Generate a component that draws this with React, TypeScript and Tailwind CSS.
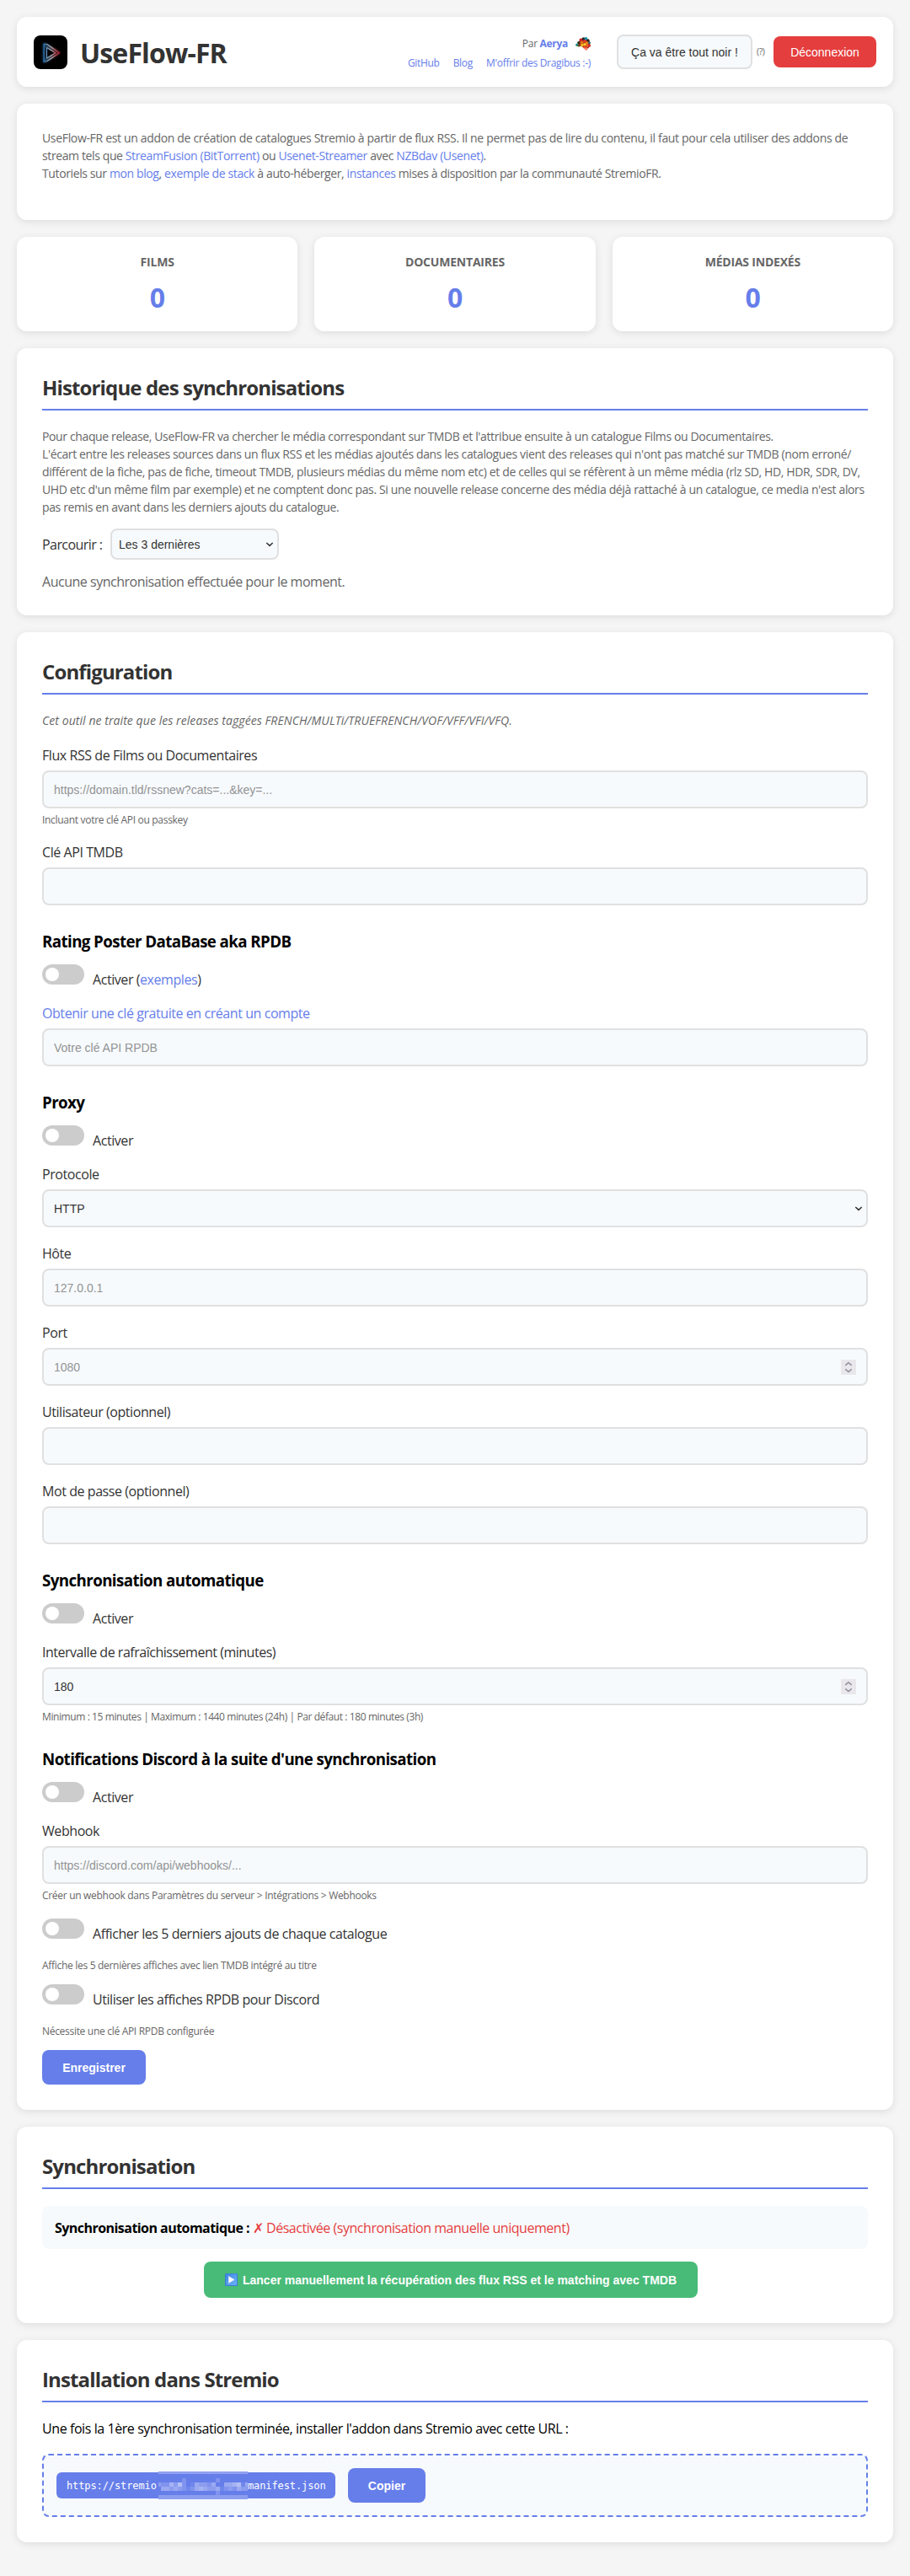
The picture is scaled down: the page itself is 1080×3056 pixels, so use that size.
import type { ReactNode } from "react";
import { clsx } from "clsx";

const STATS = [
  { label: "FILMS", value: 0 },
  { label: "DOCUMENTAIRES", value: 0 },
  { label: "MÉDIAS INDEXÉS", value: 0 },
];

const controlClass =
  "h-[45px] w-full rounded-lg border-2 border-[#e0e0e0] bg-[#f7fafc] px-3 font-['Liberation_Sans',sans-serif] text-sm tracking-normal text-[#333] placeholder:text-[#929395] focus:outline-none";

const buttonClass =
  "rounded-lg bg-[#667eea] font-['Liberation_Sans',sans-serif] text-sm font-bold tracking-normal text-white";

// One string per row of 5px blocks, each letter is a shade of MASK_SHADES
const MASK_ROWS = [
  "......b.......b.......a",
  "cbbecfb.adccbd..ddefadd",
  ".ddcdcbabdedccdabcbdccb",
  "..............b........",
];

const MASK_SHADES: Record<string, string> = {
  a: "#7087eb",
  b: "#8093ee",
  c: "#8c9def",
  d: "#9aa9f1",
  e: "#a6b3f3",
  f: "#b3bff5",
};

function Link({ children }: { children: ReactNode }) {
  return (
    <a href="#" className="text-[#667eea]">
      {children}
    </a>
  );
}

function Card({ title, children }: { title?: string; children: ReactNode }) {
  return (
    <section className="rounded-xl bg-white p-[30px] shadow-[0_2px_10px_rgba(0,0,0,0.1)]">
      {title && (
        <h2 className="mb-5 border-b-2 border-[#667eea] pt-px pb-[9px] text-2xl leading-8 font-bold tracking-[-0.036em] text-[#333]">
          {title}
        </h2>
      )}
      {children}
    </section>
  );
}

function Subtitle({ children }: { children: ReactNode }) {
  return (
    <h3 className="mt-[30px] mb-[15px] text-[18.72px] leading-[25px] font-bold tracking-[-0.031em] text-black">
      {children}
    </h3>
  );
}

function Help({ children }: { children: ReactNode }) {
  return <p className="h-4 pt-px text-xs leading-4 tracking-[-0.025em] text-[#666]">{children}</p>;
}

function Field({
  label,
  help,
  last,
  children,
}: {
  label: ReactNode;
  help?: ReactNode;
  last?: boolean;
  children: ReactNode;
}) {
  return (
    <div className={clsx(!last && "mb-5")}>
      <label className="mb-[7px] block pt-px leading-[21px] text-[#333]">{label}</label>
      {children}
      {help && (
        <div className="mt-[5px]">
          <Help>{help}</Help>
        </div>
      )}
    </div>
  );
}

function TextInput({ placeholder }: { placeholder?: string }) {
  return <input type="text" placeholder={placeholder} className={clsx(controlClass, "block")} />;
}

function NumberInput({ placeholder, value }: { placeholder?: string; value?: string }) {
  return (
    <div className="relative">
      <input
        type="text"
        inputMode="numeric"
        placeholder={placeholder}
        defaultValue={value}
        className={clsx(controlClass, "block")}
      />
      <svg
        className="absolute top-[14px] right-[14px] bg-[#e9e7ec]"
        width="18"
        height="18"
        viewBox="0 0 18 18"
        fill="none"
        stroke="#8f8f9d"
        strokeWidth="1.4"
      >
        <path d="M5.3 6.9 L9 3.7 L12.7 6.9" />
        <path d="M5.3 11.4 L9 14.6 L12.7 11.4" />
      </svg>
    </div>
  );
}

function SelectArrow({ className }: { className: string }) {
  return (
    <svg
      className={clsx("pointer-events-none absolute", className)}
      width="10"
      height="8"
      viewBox="0 0 10 8"
      fill="none"
      stroke="#333"
      strokeWidth="1.5"
    >
      <path d="M1.3 2 L5 5.4 L8.7 2" />
    </svg>
  );
}

function Toggle({ children }: { children: ReactNode }) {
  return (
    <div className="mb-5 flex h-[27px] items-start gap-2.5">
      <button
        type="button"
        role="switch"
        aria-checked="false"
        className="flex h-6 w-[50px] items-center rounded-full bg-[#ccc] px-1"
      >
        <span className="h-4 w-4 rounded-full bg-white" />
      </button>
      <span className="mt-2 leading-[21px] text-[#333]">{children}</span>
    </div>
  );
}

function Logo() {
  return (
    <svg width="40" height="40" viewBox="0 0 40 40" fill="none" strokeLinejoin="round">
      <defs>
        <linearGradient id="neon" gradientUnits="userSpaceOnUse" x1="11" y1="0" x2="31" y2="0">
          <stop offset="0" stopColor="#1f6fb5" />
          <stop offset="0.25" stopColor="#6f9fc8" />
          <stop offset="0.5" stopColor="#b9b4bd" />
          <stop offset="0.75" stopColor="#c2525c" />
          <stop offset="1" stopColor="#a3202c" />
        </linearGradient>
        <filter id="glow" x="-50%" y="-50%" width="200%" height="200%">
          <feGaussianBlur stdDeviation="1.8" />
        </filter>
      </defs>
      <rect width="40" height="40" rx="8" fill="#000" />
      <path d="M12.5 10.5 V31 L30 20.5 Z" stroke="url(#neon)" strokeWidth="3" opacity="0.6" filter="url(#glow)" />
      <path d="M12 10 V31.5 L16 30.5 L30.5 20.7 L16 10.5 Z" stroke="url(#neon)" strokeWidth="1.1" />
      <path d="M15.5 14.5 V27 L26 20.7 Z" stroke="url(#neon)" strokeWidth="1.1" />
    </svg>
  );
}

// Little pile of Dragibus
function Candies() {
  return (
    <svg width="18" height="16" viewBox="0 0 18 16">
      <path d="M2 9 L6 2 L12 0.5 L17 5 L17.5 11 L13 15 L7 11 L3 11 Z" fill="#a8301c" />
      <circle cx="1.8" cy="9.2" r="1.7" fill="#1f8f8a" />
      <circle cx="3.8" cy="6.5" r="1.6" fill="#2b2b1c" />
      <circle cx="4" cy="10" r="1.5" fill="#5d4a1c" />
      <circle cx="6.3" cy="3.4" r="1.8" fill="#c8202a" />
      <circle cx="9.4" cy="2" r="1.7" fill="#262a2e" />
      <circle cx="12.5" cy="1.9" r="1.8" fill="#168fae" />
      <circle cx="15" cy="4" r="1.7" fill="#252525" />
      <circle cx="7.6" cy="6.3" r="1.8" fill="#e8731c" />
      <circle cx="11" cy="5" r="1.7" fill="#e03a1e" />
      <circle cx="13.5" cy="6.8" r="1.6" fill="#f08a1c" />
      <circle cx="16.5" cy="6.8" r="1.4" fill="#1e6f74" />
      <circle cx="7.8" cy="9.6" r="1.8" fill="#f3b81d" />
      <circle cx="11" cy="8.7" r="1.8" fill="#f6cb2a" />
      <circle cx="14" cy="10" r="1.8" fill="#ef6a24" />
      <circle cx="16.5" cy="10" r="1.5" fill="#d9202c" />
      <circle cx="10.6" cy="12" r="1.6" fill="#ef4b2a" />
      <circle cx="12.6" cy="14" r="1.8" fill="#fb8468" />
    </svg>
  );
}

function PlayIcon() {
  return (
    <svg width="15" height="15" viewBox="0 0 15 15">
      <defs>
        <linearGradient id="play" x1="0" y1="0" x2="1" y2="1">
          <stop offset="0" stopColor="#3f86e0" />
          <stop offset="1" stopColor="#6cb2fb" />
        </linearGradient>
      </defs>
      <rect width="15" height="15" rx="1.5" fill="#3c78d2" />
      <rect x="1" y="0.5" width="13" height="13.5" rx="1" fill="url(#play)" />
      <path d="M4.5 3.5 L11 7.5 L4.5 11.5 Z" fill="#fff" stroke="#e8effb" strokeWidth="0.6" strokeLinejoin="round" />
    </svg>
  );
}

// Hides the private host part of the manifest URL
function HostMask() {
  return (
    <svg className="-my-px shrink-0" width="106" height="33" viewBox="0 0 106 33" shapeRendering="crispEdges">
      <rect width="106" height="33" fill="#667eea" />
      <rect width="106" height="3" fill="#91a1ef" />
      <rect y="28" width="106" height="5" fill="#8c9def" />
      {MASK_ROWS.map((row, y) =>
        row
          .split("")
          .map((shade, x) =>
            shade === "." ? null : (
              <rect
                key={`${x}-${y}`}
                x={x === 0 ? 0 : x * 5 - 2}
                y={8 + y * 5}
                width={x === 0 ? 3 : 5}
                height="5"
                fill={MASK_SHADES[shade]}
              />
            ),
          ),
      )}
    </svg>
  );
}

function Header() {
  return (
    <header className="flex h-[83px] items-center justify-between rounded-xl bg-white px-5 shadow-[0_2px_10px_rgba(0,0,0,0.1)]">
      <div className="flex items-center gap-[15px]">
        <Logo />
        <h1 className="pt-0.5 text-[32px] leading-[43px] font-bold tracking-[-0.027em] text-[#333]">UseFlow-FR</h1>
      </div>
      <div className="flex items-center">
        <div className="mr-[31px] flex flex-col items-end gap-[7px] pt-[3px] text-xs leading-4 tracking-[-0.025em] text-[#666]">
          <div className="flex items-center gap-[9px]">
            <span>
              Par{" "}
              <a href="#" className="font-bold text-[#667eea]">
                Aerya
              </a>
            </span>
            <Candies />
          </div>
          <div className="flex gap-4">
            <Link>GitHub</Link>
            <Link>Blog</Link>
            <Link>M'offrir des Dragibus :-)</Link>
          </div>
        </div>
        <button className="h-[41px] w-[161px] rounded-lg border-2 border-[#e0e0e0] bg-[#f7fafc] font-['Liberation_Sans',sans-serif] text-sm tracking-normal text-[#333]">
          Ça va être tout noir !
        </button>
        <span className="w-[25px] pl-[5px] text-[10.4px] tracking-[-0.04em] text-[#666]">(?)</span>
        <button className="h-[37px] w-[122px] rounded-lg bg-[#e53e3e] font-['Liberation_Sans',sans-serif] text-sm tracking-normal text-white">
          Déconnexion
        </button>
      </div>
    </header>
  );
}

export default function App() {
  return (
    <div className="flex min-h-[3056px] flex-col gap-5 bg-[#f5f5f5] p-5 font-['Open_Sans','Noto_Sans',sans-serif] text-base tracking-[-0.027em] text-black">
      <Header />

      <Card>
        <p className="mb-[15px] text-sm leading-[21px] tracking-[-0.0275em] text-[#666]">
          <span className="tracking-[-0.0237em]">
            UseFlow-FR est un addon de création de catalogues Stremio à partir de flux RSS. Il ne permet pas de lire du
            contenu, il faut pour cela utiliser des addons de
          </span>
          <br />
          stream tels que <Link>StreamFusion (BitTorrent)</Link> ou <Link>Usenet-Streamer</Link> avec{" "}
          <Link>NZBdav (Usenet)</Link>.
          <br />
          Tutoriels sur <Link>mon blog</Link>, <Link>exemple de stack</Link> à auto-héberger, <Link>instances</Link>{" "}
          mises à disposition par la communauté StremioFR.
        </p>
      </Card>

      <div className="grid grid-cols-3 gap-5">
        {STATS.map((stat) => (
          <div
            key={stat.label}
            className="rounded-xl bg-white p-5 text-center shadow-[0_2px_10px_rgba(0,0,0,0.1)]"
          >
            <h3 className="mb-2.5 text-sm leading-[19px] font-bold tracking-[-0.015em] text-[#666]">{stat.label}</h3>
            <div className="h-[43px] text-[32px] leading-[45px] font-bold text-[#667eea]">{stat.value}</div>
          </div>
        ))}
      </div>

      <Card title="Historique des synchronisations">
        <p className="mb-[15px] text-sm leading-[21px] tracking-[-0.0265em] whitespace-nowrap text-[#666]">
          Pour chaque release, UseFlow-FR va chercher le média correspondant sur TMDB et l'attribue ensuite à un
          catalogue Films ou Documentaires.
          <br />
          L'écart entre les releases sources dans un flux RSS et les médias ajoutés dans les catalogues vient des
          releases qui n'ont pas matché sur TMDB (nom erroné/
          <br />
          différent de la fiche, pas de fiche, timeout TMDB, plusieurs médias du même nom etc) et de celles qui se
          réfèrent à un même média (rlz SD, HD, HDR, SDR, DV,
          <br />
          UHD etc d'un même film par exemple) et ne comptent donc pas. Si une nouvelle release concerne des média déjà
          rattaché à un catalogue, ce media n'est alors
          <br />
          pas remis en avant dans les derniers ajouts du catalogue.
        </p>
        <div className="mb-[15px] flex items-center text-[#333]">
          <label className="w-[81px] tracking-[-0.035em]">Parcourir :</label>
          <div className="relative">
            <select className="block h-[37px] w-[200px] appearance-none rounded-lg border-2 border-[#e0e0e0] bg-[#f7fafc] px-2 font-['Liberation_Sans',sans-serif] text-sm tracking-normal text-[#333]">
              <option>Les 3 dernières</option>
            </select>
            <SelectArrow className="top-[15px] right-1.5" />
          </div>
        </div>
        <p className="h-[21px] pt-px leading-[21px] tracking-[-0.03em] text-[#666]">
          Aucune synchronisation effectuée pour le moment.
        </p>
      </Card>

      <Card title="Configuration">
        <p className="mb-5 text-sm leading-[21px] tracking-[0.005em] text-[#666] italic">
          Cet outil ne traite que les releases taggées FRENCH/MULTi/TRUEFRENCH/VOF/VFF/VFI/VFQ.
        </p>
        <Field label="Flux RSS de Films ou Documentaires" help="Incluant votre clé API ou passkey">
          <TextInput placeholder="https://domain.tld/rssnew?cats=...&key=..." />
        </Field>
        <Field label="Clé API TMDB" last>
          <TextInput />
        </Field>

        <Subtitle>Rating Poster DataBase aka RPDB</Subtitle>
        <Toggle>
          Activer (<Link>exemples</Link>)
        </Toggle>
        <Field label={<Link>Obtenir une clé gratuite en créant un compte</Link>} last>
          <TextInput placeholder="Votre clé API RPDB" />
        </Field>

        <Subtitle>Proxy</Subtitle>
        <Toggle>Activer</Toggle>
        <Field label="Protocole">
          <div className="relative">
            <select className={clsx(controlClass, "block appearance-none")}>
              <option>HTTP</option>
            </select>
            <SelectArrow className="top-[19px] right-1.5" />
          </div>
        </Field>
        <Field label="Hôte">
          <TextInput placeholder="127.0.0.1" />
        </Field>
        <Field label="Port">
          <NumberInput placeholder="1080" />
        </Field>
        <Field label="Utilisateur (optionnel)">
          <TextInput />
        </Field>
        <Field label="Mot de passe (optionnel)" last>
          <TextInput />
        </Field>

        <Subtitle>Synchronisation automatique</Subtitle>
        <Toggle>Activer</Toggle>
        <Field
          label={<span className="tracking-[-0.03em]">Intervalle de rafraîchissement (minutes)</span>}
          help={
            <span className="tracking-[-0.034em]">
              Minimum : 15 minutes | Maximum : 1440 minutes (24h) | Par défaut : 180 minutes (3h)
            </span>
          }
          last
        >
          <NumberInput value="180" />
        </Field>

        <Subtitle>Notifications Discord à la suite d'une synchronisation</Subtitle>
        <Toggle>Activer</Toggle>
        <Field label="Webhook" help="Créer un webhook dans Paramètres du serveur > Intégrations > Webhooks">
          <TextInput placeholder="https://discord.com/api/webhooks/..." />
        </Field>
        <Toggle>Afficher les 5 derniers ajouts de chaque catalogue</Toggle>
        <div className="mb-[15px]">
          <Help>Affiche les 5 dernières affiches avec lien TMDB intégré au titre</Help>
        </div>
        <Toggle>Utiliser les affiches RPDB pour Discord</Toggle>
        <div className="mb-[15px]">
          <Help>Nécessite une clé API RPDB configurée</Help>
        </div>
        <button className={clsx(buttonClass, "block h-[41px] w-[123px]")}>Enregistrer</button>
      </Card>

      <Card title="Synchronisation">
        <div className="mb-[15px] rounded-lg bg-[#f7fafc] px-[15px] pt-4 pb-3.5 leading-[21px]">
          <strong className="tracking-[-0.034em]">Synchronisation automatique :</strong>{" "}
          <span className="tracking-[-0.029em] text-[#e53e3e]">
            ✗ Désactivée (synchronisation manuelle uniquement)
          </span>
        </div>
        <div className="flex justify-center pr-2.5">
          <button className="flex h-[43px] w-[586px] items-center justify-center gap-1.5 rounded-lg bg-[#48bb78] font-['Liberation_Sans',sans-serif] text-sm font-bold tracking-normal whitespace-nowrap text-white">
            <PlayIcon />
            Lancer manuellement la récupération des flux RSS et le matching avec TMDB
          </button>
        </div>
      </Card>

      <Card title="Installation dans Stremio">
        <p className="mb-[19px] pt-px leading-[21px] tracking-[-0.0265em]">
          Une fois la 1ère synchronisation terminée, installer l'addon dans Stremio avec cette URL :
        </p>
        <div className="flex items-center gap-[15px] rounded-lg border-2 border-dashed border-[#667eea] bg-[#f7fafc] p-[15px]">
          <code className="flex h-[31px] w-[331px] items-center rounded-md bg-[#667eea] pl-3 font-['DejaVu_Sans_Mono',monospace] text-xs tracking-[-0.1px] text-white">
            <span className="w-[109px]">https://stremio</span>
            <HostMask />
            <span>manifest.json</span>
          </code>
          <button className={clsx(buttonClass, "h-[41px] w-[92px]")}>Copier</button>
        </div>
      </Card>
    </div>
  );
}
